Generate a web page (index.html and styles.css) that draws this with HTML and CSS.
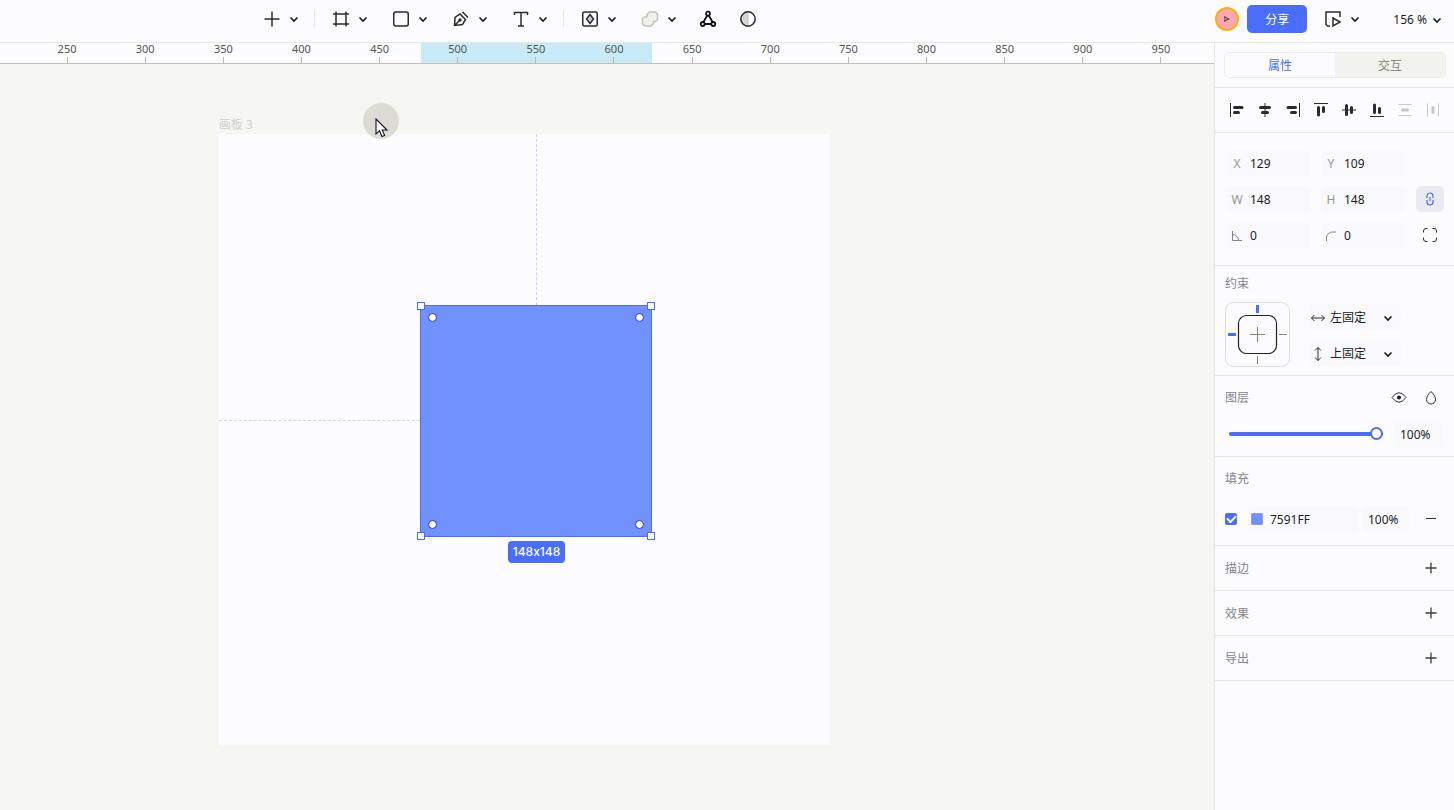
FILE: index.html
```html
<!DOCTYPE html>
<html lang="zh-CN">
<head>
<meta charset="utf-8">
<title>画板 3</title>
<link rel="stylesheet" href="styles.css">
</head>
<body>
<svg class="defs" aria-hidden="true">
  <symbol id="chev" viewBox="0 0 12 12"><path d="M2.5 4.5 6 8l3.500-3.500" fill="none" stroke="currentColor" stroke-width="1.700"/></symbol>
  <symbol id="plus" viewBox="0 0 12 12"><path d="M6 .5v11M.5 6h11" fill="none" stroke="#3c3c3c" stroke-width="1.300"/></symbol>
</svg>
<header class="topbar">
  <nav class="tools" aria-label="工具">
    <div class="tool"><button class="icon" aria-label="插入"><svg width="18" height="18" viewBox="0 0 18 18"><path d="M9 1.500v15M1.500 9h15"/></svg></button><button class="more" aria-label="更多"><svg width="12" height="12"><use href="#chev"/></svg></button></div>
    <span class="divider"></span>
    <div class="tool"><button class="icon" aria-label="画板"><svg width="18" height="18" viewBox="0 0 18 18"><path d="M4 1.500v15M14 1.500v15M1 4h16M1 14h16"/></svg></button><button class="more" aria-label="更多"><svg width="12" height="12"><use href="#chev"/></svg></button></div>
    <div class="tool"><button class="icon" aria-label="矩形"><svg width="18" height="18" viewBox="0 0 18 18"><rect x="1.750" y="2" width="14.500" height="14" rx="2"/></svg></button><button class="more" aria-label="更多"><svg width="12" height="12"><use href="#chev"/></svg></button></div>
    <div class="tool"><button class="icon" aria-label="钢笔"><svg width="18" height="18" viewBox="0 0 18 18"><path d="M2.500 15.500 3 7.500 8 4 13.500 9.500 10.500 14.500ZM2.500 15.500 7.500 10.500M10.500 2l5.500 5.500"/><circle cx="8" cy="10" r="1" fill="currentColor"/></svg></button><button class="more" aria-label="更多"><svg width="12" height="12"><use href="#chev"/></svg></button></div>
    <div class="tool"><button class="icon" aria-label="文本"><svg width="18" height="18" viewBox="0 0 18 18"><path d="M2.500 5V2.500h13V5M9 2.500v13.500M6 16h6"/></svg></button><button class="more" aria-label="更多"><svg width="12" height="12"><use href="#chev"/></svg></button></div>
    <span class="divider"></span>
    <div class="tool"><button class="icon" aria-label="组件"><svg width="18" height="18" viewBox="0 0 18 18"><rect x="1.750" y="2" width="14.500" height="14" rx="1.500"/><path d="M9 4.500 12.500 9 9 13.500 5.500 9Z" fill="#ccccc8"/></svg></button><button class="more" aria-label="更多"><svg width="12" height="12"><use href="#chev"/></svg></button></div>
    <div class="tool"><button class="icon dim" aria-label="布尔运算"><svg width="18" height="18" viewBox="0 0 18 18"><path d="M8.500 2H14.500L16.500 4V9.500L14.500 11.500H12.500V13.500L10 16H3.500L1.500 14V9L3.500 7H6V4.500Z" fill="#f0f0ec"/></svg></button><button class="more" aria-label="更多"><svg width="12" height="12"><use href="#chev"/></svg></button></div>
    <div class="tool pair"><button class="icon" aria-label="连线"><svg width="18" height="18" viewBox="0 0 18 18" class="heavy"><path d="M8.200 5.500 4.500 12M9.800 5.500l3.700 6.500M5.500 14h7"/><circle cx="9" cy="3.700" r="2"/><circle cx="3.700" cy="14" r="2"/><circle cx="14.300" cy="14" r="2"/></svg></button><button class="icon" aria-label="蒙版"><svg width="18" height="18" viewBox="0 0 18 18"><path d="M9 2a7 7 0 0 0 0 14Z" fill="#d6d6d2" stroke="#c0c0bc" stroke-width="1"/><circle cx="9" cy="9" r="7.200"/></svg></button></div>
  </nav>
  <div class="account">
    <button class="avatar" aria-label="用户"><svg width="8" height="8" viewBox="0 0 8 8"><path d="M1 1l6 3-6 3Z" fill="#6b4a50"/><path d="M1 4h3" stroke="#f4a9a9"/></svg></button>
    <button class="share">分享</button>
    <div class="tool"><button class="icon" aria-label="预览"><svg width="18" height="18" viewBox="0 0 18 18"><path d="M6 16H3.500L2 14.500V2H16V7"/><path d="M9 8 16 12 9 16Z"/></svg></button><button class="more" aria-label="更多"><svg width="12" height="12"><use href="#chev"/></svg></button></div>
    <button class="zoom">156 %<svg width="12" height="12"><use href="#chev"/></svg></button>
  </div>
</header>
<div class="body">
  <main class="workspace">
    <div class="ruler">
      <div class="range"></div>
      <div class="marks"><span>250</span><span>300</span><span>350</span><span>400</span><span>450</span><span>500</span><span>550</span><span>600</span><span>650</span><span>700</span><span>750</span><span>800</span><span>850</span><span>900</span><span>950</span></div>
    </div>
    <div class="canvas">
      <span class="board-name">画板 3</span>
      <div class="board">
        <div class="guide-v"></div><div class="guide-h"></div>
        <div class="shape">
          <i class="handle nw"></i><i class="handle ne"></i><i class="handle sw"></i><i class="handle se"></i>
          <i class="corner c-nw"></i><i class="corner c-ne"></i><i class="corner c-sw"></i><i class="corner c-se"></i>
        </div>
        <span class="size">148x148</span>
      </div>
      <div class="pointer"><svg width="14" height="20" viewBox="0 0 14 20"><path d="M1 1v15l3.500-3.300 2.400 5.800 2.700-1.100L7.200 12H12Z" fill="#fff" stroke="#111122" stroke-width="1.100"/></svg></div>
    </div>
  </main>
  <aside class="panel">
    <section class="tabs-wrap"><div class="tabs"><button class="tab active">属性</button><button class="tab">交互</button></div></section>
    <section class="align">
      <button aria-label="左对齐"><svg width="16" height="16" viewBox="0 0 16 16"><path d="M1.500 1v14"/><path class="bar" d="M5.500 5.500H13M5.500 10.500H9.500"/></svg></button>
      <button aria-label="水平居中"><svg width="16" height="16" viewBox="0 0 16 16"><path d="M8 1v14"/><path class="bar" d="M3.500 5.500h9M5.500 10.500h5"/></svg></button>
      <button aria-label="右对齐"><svg width="16" height="16" viewBox="0 0 16 16"><path d="M14.500 1v14"/><path class="bar" d="M3 5.500H10.500M6.500 10.500H10.500"/></svg></button>
      <button aria-label="顶对齐"><svg width="16" height="16" viewBox="0 0 16 16"><path d="M1 1.500h14"/><path class="bar" d="M5.500 5.500V13M10.500 5.500V9.500"/></svg></button>
      <button aria-label="垂直居中"><svg width="16" height="16" viewBox="0 0 16 16"><path d="M1 8h14"/><path class="bar" d="M5.500 3.500v9M10.500 5.500v5"/></svg></button>
      <button aria-label="底对齐"><svg width="16" height="16" viewBox="0 0 16 16"><path d="M1 14.500h14"/><path class="bar" d="M5.500 3V10.500M10.500 6.500V10.500"/></svg></button>
      <button class="off" aria-label="垂直分布" disabled><svg width="16" height="16" viewBox="0 0 16 16"><path d="M1.500 2.500h13M1.500 13.500h13"/><path class="bar" d="M5.500 8h5"/></svg></button>
      <button class="off" aria-label="水平分布" disabled><svg width="16" height="16" viewBox="0 0 16 16"><path d="M2.500 1.500v13M13.500 1.500v13"/><path class="bar" d="M8 5.500v5"/></svg></button>
    </section>
    <section class="geometry">
      <label class="field"><span>X</span><input value="129"></label>
      <label class="field"><span>Y</span><input value="109"></label>
      <i></i>
      <label class="field"><span>W</span><input value="148"></label>
      <label class="field"><span>H</span><input value="148"></label>
      <button class="lock" aria-label="锁定比例"><svg width="14" height="14" viewBox="0 0 14 14"><path d="M4 6V4a3 3 0 0 1 6 0v2M4 8v2a3 3 0 0 0 6 0V8M7 5v4"/></svg></button>
      <label class="field"><span><svg width="12" height="12" viewBox="0 0 12 12"><path d="M1.500 1v9.500H11M1.500 4.500a6 6 0 0 1 6 6"/></svg></span><input value="0" aria-label="旋转"></label>
      <label class="field"><span><svg width="12" height="12" viewBox="0 0 12 12"><path d="M1.500 11V8a6 6 0 0 1 6-6H11"/></svg></span><input value="0" aria-label="圆角"></label>
      <button aria-label="独立圆角"><svg width="16" height="16" viewBox="0 0 16 16"><path d="M1.500 5.500V4a2.500 2.500 0 0 1 2.500-2.500h1.500M10.500 1.500H12A2.500 2.500 0 0 1 14.500 4v1.500M14.500 10.500V12a2.500 2.500 0 0 1-2.500 2.500h-1.500M5.500 14.500H4A2.500 2.500 0 0 1 1.500 12v-1.500"/></svg></button>
    </section>
    <section class="constraint">
      <h2>约束</h2>
      <div class="constraint-row">
        <svg width="65" height="65" viewBox="0 0 65 65"><rect x=".5" y=".5" width="64" height="64" rx="8" fill="none" stroke="#dedede"/><rect x="13.500" y="13.500" width="38" height="38" rx="8" fill="none" stroke="#22222a" stroke-width="1.200"/><path d="M25 32.500h15M32.500 25v15M54 32.500h8M32.500 54v8" stroke="#85857c"/><path d="M32.500 3v8M3 32.500h8" stroke="#4a6dfc" stroke-width="3"/></svg>
        <div class="selects">
          <label class="field"><span><svg width="16" height="12" viewBox="0 0 16 12"><path d="M1.500 6h13M4.500 3l-3 3 3 3M11.500 3l3 3-3 3"/></svg></span><select aria-label="水平约束"><option>左固定</option></select><svg class="arrow" width="12" height="12"><use href="#chev"/></svg></label>
          <label class="field"><span><svg width="12" height="16" viewBox="0 0 12 16"><path d="M6 1.500v13M3 4.500l3-3 3 3M3 11.500l3 3 3-3"/></svg></span><select aria-label="垂直约束"><option>上固定</option></select><svg class="arrow" width="12" height="12"><use href="#chev"/></svg></label>
        </div>
      </div>
    </section>
    <section class="layer">
      <div class="head"><h2>图层</h2><button aria-label="可见性"><svg width="16" height="16" viewBox="0 0 16 16"><path d="M1 8.500q7-9.500 14 0-7 9.500-14 0Z"/><circle cx="8" cy="8.500" r="2" fill="currentColor" stroke="none"/></svg></button><button aria-label="混合模式"><svg width="16" height="16" viewBox="0 0 16 16"><path d="M8 2.500C5.500 5 3.500 7.500 3.500 10.500a4.500 4.500 0 0 0 9 0C12.500 7.500 10.500 5 8 2.500Z"/></svg></button></div>
      <div class="opacity"><input type="range" value="100" aria-label="不透明度"><input class="percent" value="100%" aria-label="不透明度数值"></div>
    </section>
    <section class="fill">
      <div class="head"><h2>填充</h2></div>
      <div class="fill-row"><input type="checkbox" checked aria-label="启用填充"><label class="color"><i></i><input value="7591FF" aria-label="颜色"></label><input class="percent" value="100%" aria-label="填充不透明度"><button aria-label="移除"><svg width="12" height="12" viewBox="0 0 12 12"><path d="M1 5.500h10"/></svg></button></div>
    </section>
    <section class="simple"><div class="head"><h2>描边</h2><button aria-label="添加描边"><svg width="12" height="12"><use href="#plus"/></svg></button></div></section>
    <section class="simple"><div class="head"><h2>效果</h2><button aria-label="添加效果"><svg width="12" height="12"><use href="#plus"/></svg></button></div></section>
    <section class="simple"><div class="head"><h2>导出</h2><button aria-label="添加导出"><svg width="12" height="12"><use href="#plus"/></svg></button></div></section>
  </aside>
</div>
</body>
</html>
```
FILE: styles.css
```css
* { box-sizing: border-box; }
body {
  margin: 0;
  height: 100vh;
  display: flex;
  flex-direction: column;
  overflow: hidden;
  background: #fcfcff;
  color: #1c1c22;
  font: 12px/20px "Noto Sans", "Noto Sans CJK SC", sans-serif;
}
button, input, select { font: inherit; color: inherit; }
button {
  display: flex;
  align-items: center;
  justify-content: center;
  padding: 0;
  border: 0;
  background: none;
}
input, select { min-width: 0; padding: 0; border: 0; background: none; outline: 0; }
svg { flex: none; display: block; }
.defs { position: absolute; width: 0; height: 0; }

.topbar {
  display: flex;
  justify-content: space-between;
  flex: none;
  height: 43px;
  padding: 0 7px 4px 260px;
  border-bottom: 1px solid #e9e9e0;
}
.tools, .account, .tool { display: flex; align-items: center; }
.tool + .tool { margin-left: 16px; }
.tool + .pair { gap: 16px; margin-left: 14px; }
.icon { width: 24px; height: 24px; }
.icon svg { fill: none; stroke: #2b2b2b; stroke-width: 1.5; }
.icon .heavy { stroke: #111111; stroke-width: 1.8; }
.icon.dim svg { stroke: #c2c2ba; }
.more { width: 20px; height: 24px; }
.divider { width: 1px; height: 16px; margin: 0 14px 0 10px; background: #e5e5e2; }
.avatar {
  width: 24px;
  height: 24px;
  margin-right: 8px;
  border: 2px solid #ffae10;
  border-radius: 50%;
  background: #f8a9b0;
}
.share {
  width: 60px;
  height: 28px;
  margin-right: 14px;
  padding-top: 2px;
  border-radius: 5px;
  background: #4a6dfc;
  color: #ffffff;
}
.zoom { gap: 4px; margin-left: 28px; padding: 2px 4px 0 0; }

.body { display: flex; flex: 1; min-height: 0; }
.workspace { display: flex; flex: 1; flex-direction: column; min-width: 0; }
.ruler {
  position: relative;
  flex: none;
  height: 21px;
  border-bottom: 1px solid #c2c2ba;
}
.range { position: absolute; left: 421px; width: 231px; height: 20px; background: #c9ebf8; }
.marks {
  position: relative;
  display: grid;
  grid-template-columns: repeat(15, 1fr);
  width: 1172px;
  margin-left: 28px;
  color: #55554f;
  font-size: 11px;
  line-height: 12px;
  text-align: center;
}
.marks span::after { content: ""; display: block; width: 1px; height: 6px; margin: 2px auto 0; background: #b8b8b5; }

.canvas { position: relative; flex: 1; overflow: hidden; background: #f6f6f3; }
.board-name { position: absolute; left: 219px; top: 51px; color: #d0d0c8; }
.board { position: absolute; left: 219px; top: 70px; width: 611px; height: 611px; background: #fcfcff; }
.guide-v { position: absolute; left: 317px; top: 0; height: 171px; border-left: 1px dashed #cbd3f5; }
.guide-h { position: absolute; left: 0; top: 286px; width: 201px; border-top: 1px dashed #cbd3f5; }
.shape { position: absolute; left: 201px; top: 171px; width: 232px; height: 232px; border: 1px solid #4a6dfc; background: #7191ff; }
.handle { position: absolute; width: 8px; height: 8px; border: 1px solid #4a6dfc; background: #ffffff; }
.nw, .ne { top: -4px; }
.sw, .se { bottom: -4px; }
.nw, .sw { left: -4px; }
.ne, .se { right: -4px; }
.corner { position: absolute; width: 9px; height: 9px; border: 1px solid #2929ed; border-radius: 50%; background: #ffffff; }
.c-nw, .c-ne { top: 7px; }
.c-sw, .c-se { bottom: 7px; }
.c-nw, .c-sw { left: 7px; }
.c-ne, .c-se { right: 7px; }
.size {
  position: absolute;
  left: 289px;
  top: 407px;
  width: 57px;
  border-radius: 4px;
  background: #4a6dfc;
  color: #ffffff;
  font: 500 12px/22px Inter, sans-serif;
  font-feature-settings: "calt" 0;
  text-align: center;
}
.pointer {
  position: absolute;
  left: 363px;
  top: 39px;
  width: 36px;
  height: 36px;
  padding: 15px 0 0 12px;
  border-radius: 50%;
  background: #dcdcd4;
}

.panel { flex: none; width: 240px; border-left: 1px solid #e6e6e0; background: #fcfcff; }
.panel section { border-bottom: 1px solid #e6e6e6; }
.panel svg { fill: none; stroke: #2b2b2b; }
h2 { flex: 1; margin: 0; padding-top: 1px; color: #85858a; font-size: 12px; font-weight: 400; line-height: 20px; }
.panel .tabs-wrap { padding: 9px 8px 9px 9px; }
.tabs { display: flex; overflow: hidden; border: 1px solid #ebebe8; border-radius: 5px; }
.tab { flex: 1; height: 24px; padding-top: 2px; background: #f2f2ee; color: #888884; }
.tab.active { background: #fcfcff; color: #4a6dfc; }
.align { display: grid; grid-template-columns: repeat(8, 1fr); padding: 10px 7px 10px 8px; }
.align button { height: 24px; }
.align .bar { stroke-width: 3; stroke-linecap: round; }
.align .off svg { stroke: #c8c8c4; }
.geometry { display: grid; grid-template-columns: 82px 82px 28px; gap: 10px 12px; padding: 17px 10px 17px 13px; }
.field { display: flex; align-items: center; gap: 4px; height: 26px; padding-top: 2px; border-radius: 4px; background: #fafafd; }
.field span { display: flex; justify-content: center; flex: none; width: 18px; color: #96968f; }
.field input { flex: 1; }
.geometry .field svg { stroke: #85857c; }
.lock { border-radius: 5px; background: #ebebf2; }
.geometry .lock svg { stroke: #4a6dfc; stroke-width: 1.2; }
.constraint { padding: 7px 10px 8px; }
.constraint-row { display: flex; gap: 19px; margin-top: 8px; }
.selects { display: flex; flex-direction: column; gap: 10px; padding-top: 2px; }
.selects .field { width: 92px; gap: 3px; padding-right: 7px; }
.selects select { flex: 1; appearance: none; }
.selects .arrow { pointer-events: none; }
.layer { padding: 9px 11px 9px 10px; }
.head { display: flex; align-items: center; gap: 8px; min-height: 24px; }
.head button, .fill-row button { width: 24px; height: 24px; }
.opacity { display: flex; align-items: center; margin-top: 12px; padding-left: 4px; }
.opacity input[type="range"] { flex: 1; height: 26px; margin: 0; appearance: none; }
input[type="range"]::-webkit-slider-runnable-track { height: 4px; border-radius: 2px; background: #4a6dfc; }
input[type="range"]::-webkit-slider-thumb {
  appearance: none;
  width: 13px;
  height: 13px;
  margin-top: -5px;
  border: 2px solid #4a6dfc;
  border-radius: 50%;
  background: #ffffff;
}
.percent { width: 46px; height: 26px; padding: 1px 0 0 5px; border-radius: 4px; background: #fafafd; }
.opacity .percent { width: 48px; margin-left: 12px; }
.fill { padding: 9px 11px 13px 10px; }
.fill-row { display: flex; align-items: center; margin-top: 16px; }
.fill-row input[type="checkbox"] {
  flex: none;
  display: grid;
  place-items: center;
  width: 12px;
  height: 12px;
  margin: 0 11px 0 0;
  appearance: none;
  border-radius: 2px;
  background: #4a6dfc;
}
input[type="checkbox"]:checked::before {
  content: "";
  width: 7px;
  height: 4px;
  margin-bottom: 2px;
  border: solid #ffffff;
  border-width: 0 0 2px 2px;
  transform: rotate(-45deg);
}
.color { display: flex; align-items: center; flex: 1; min-width: 0; gap: 7px; height: 26px; margin-right: 5px; padding-left: 3px; border-radius: 4px; background: #fafafd; }
.color i { flex: none; width: 12px; height: 12px; border: 1px solid #88a0f2; border-radius: 1px; background: #7191ff; }
.color input { flex: 1; padding-top: 1px; }
.fill-row button { margin-left: 10px; }
.simple { padding: 10px 11px 10px 10px; }
```
